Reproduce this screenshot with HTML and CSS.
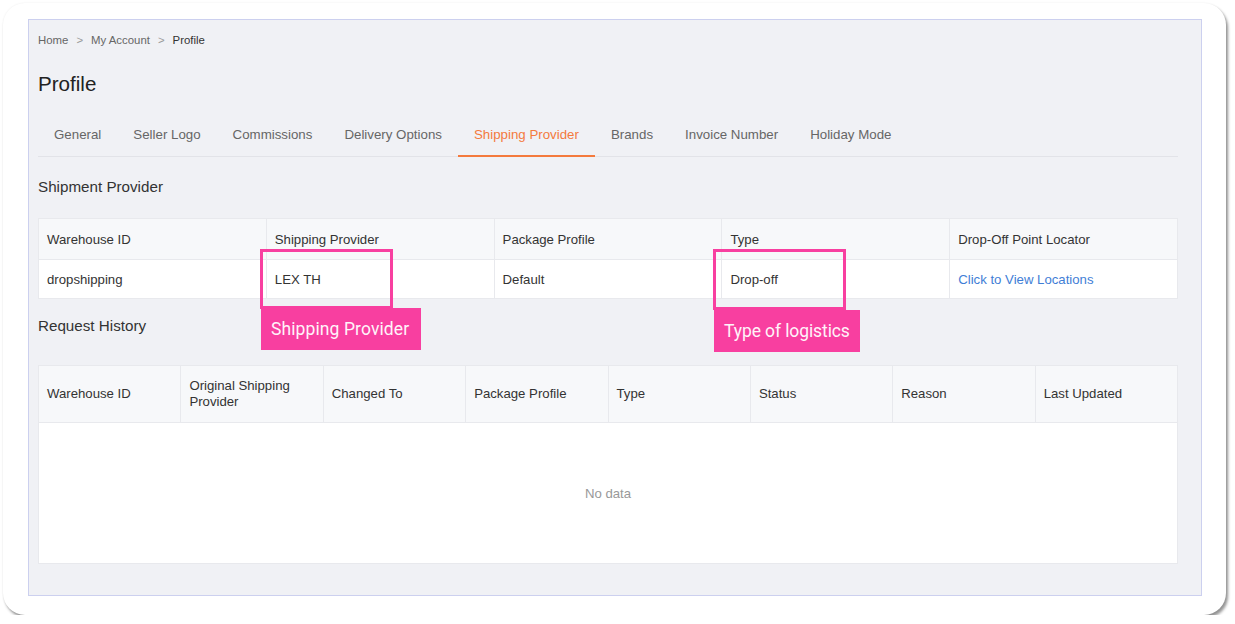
FILE: index.html
```html
<!DOCTYPE html>
<html lang="en">
<head>
<meta charset="utf-8">
<title>Profile - Shipping Provider</title>
<link rel="stylesheet" href="styles.css">
</head>
<body>
<div class="card">
  <div class="panel">
    <nav class="crumbs">
      <span class="crumb">Home</span>
      <span class="crumb-sep">&gt;</span>
      <span class="crumb">My Account</span>
      <span class="crumb-sep">&gt;</span>
      <span class="crumb crumb-current">Profile</span>
    </nav>

    <h1 class="page-title">Profile</h1>

    <ul class="tabs">
      <li class="tab">General</li>
      <li class="tab">Seller Logo</li>
      <li class="tab">Commissions</li>
      <li class="tab">Delivery Options</li>
      <li class="tab tab-active">Shipping Provider</li>
      <li class="tab">Brands</li>
      <li class="tab">Invoice Number</li>
      <li class="tab">Holiday Mode</li>
    </ul>

    <h2 class="section-title">Shipment Provider</h2>
    <table class="grid grid-current">
      <thead>
        <tr>
          <th>Warehouse ID</th>
          <th>Shipping Provider</th>
          <th>Package Profile</th>
          <th>Type</th>
          <th>Drop-Off Point Locator</th>
        </tr>
      </thead>
      <tbody>
        <tr>
          <td>dropshipping</td>
          <td>LEX TH</td>
          <td>Default</td>
          <td>Drop-off</td>
          <td><a class="link" href="#">Click to View Locations</a></td>
        </tr>
      </tbody>
    </table>

    <h2 class="section-title section-history">Request History</h2>
    <table class="grid grid-history">
      <thead>
        <tr>
          <th>Warehouse ID</th>
          <th>Original Shipping Provider</th>
          <th>Changed To</th>
          <th>Package Profile</th>
          <th>Type</th>
          <th>Status</th>
          <th>Reason</th>
          <th>Last Updated</th>
        </tr>
      </thead>
      <tbody>
        <tr>
          <td class="empty" colspan="8">No data</td>
        </tr>
      </tbody>
    </table>

    <div class="callout callout-provider">
      <div class="callout-frame"></div>
      <div class="callout-label">Shipping Provider</div>
    </div>
    <div class="callout callout-type">
      <div class="callout-frame"></div>
      <div class="callout-label">Type of logistics</div>
    </div>
  </div>
</div>
</body>
</html>
```

FILE: styles.css
```css
* {
  box-sizing: border-box;
}

html, body {
  margin: 0;
  padding: 0;
  background: #ffffff;
}

body {
  font-family: "Liberation Sans", Arial, sans-serif;
  color: #333333;
}

/* outer rounded sheet */
.card {
  margin: 3px 0 0 3px;
  width: 1223px;
  height: 612px;
  padding: 16px 0 0 25px;
  background: #ffffff;
  border-radius: 22px;
  box-shadow: 2px 3px 3px rgba(0, 0, 0, 0.42), 0 0 2px rgba(0, 0, 0, 0.08);
}

/* page panel */
.panel {
  position: relative;
  width: 1174px;
  padding: 12px 23px 31px 9px;
  background: #f0f1f5;
  border: 1px solid #ccd0ef;
}

/* breadcrumb */
.crumbs {
  display: flex;
  align-items: center;
  font-size: 11.4px;
  line-height: 16px;
  color: #666666;
}

.crumb-sep {
  margin: 0 8px;
  color: #9a9a9a;
}

.crumb-current {
  color: #333333;
}

.page-title {
  margin: 22px 0 0;
  font-size: 20.6px;
  line-height: 28px;
  font-weight: normal;
  color: #222222;
}

/* tabs */
.tabs {
  display: flex;
  list-style: none;
  margin: 27px 0 0;
  padding: 0;
  border-bottom: 1px solid #e2e3e8;
}

.tab {
  padding: 0 16px 10px;
  margin-bottom: -1px;
  font-size: 13.3px;
  line-height: 20px;
  color: #666666;
  border-bottom: 2px solid transparent;
}

.tab-active {
  color: #f47a3d;
  border-bottom-color: #f47a3d;
}

/* section headings */
.section-title {
  margin: 20px 0 0;
  font-size: 15.2px;
  line-height: 20px;
  font-weight: normal;
  color: #333333;
}

.section-history {
  margin-top: 17px;
}

/* tables */
.grid {
  width: 100%;
  table-layout: fixed;
  border-collapse: collapse;
  background: #ffffff;
  font-size: 13.2px;
  color: #333333;
}

.grid th,
.grid td {
  border: 1px solid #e8e9ed;
  padding: 0 8px;
  text-align: left;
  font-weight: normal;
  vertical-align: middle;
}

.grid th {
  background: #f7f8fa;
}

.grid-current {
  margin-top: 21px;
}

.grid-current th {
  height: 41px;
}

.grid-current td {
  height: 39px;
}

.grid-history {
  margin-top: 29px;
}

.grid-history th {
  height: 57px;
  line-height: 16px;
}

.grid-history td.empty {
  height: 141px;
  text-align: center;
  color: #999999;
}

.link {
  color: #3f7ed6;
  text-decoration: none;
}

/* highlight callouts */
.callout {
  position: absolute;
  display: flex;
  flex-direction: column;
  align-items: flex-start;
}

.callout-frame {
  width: 133px;
  height: 60px;
  border: 3px solid #f83fa0;
}

.callout-label {
  margin-left: 1px;
  margin-top: -1px;
  padding: 0 10px;
  height: 42px;
  line-height: 42px;
  background: #f83fa0;
  color: #fff3f9;
  font-family: Roboto, "Liberation Sans", sans-serif;
  font-size: 17.5px;
  letter-spacing: -0.1px;
}

.callout-provider {
  left: 231px;
  top: 229px;
}

.callout-provider .callout-label {
  padding-right: 12px;
  letter-spacing: 0.1px;
}

.callout-type {
  left: 684px;
  top: 229px;
}

.callout-type .callout-frame {
  height: 61px;
}

.callout-type .callout-label {
  margin-top: 0;
}
```
